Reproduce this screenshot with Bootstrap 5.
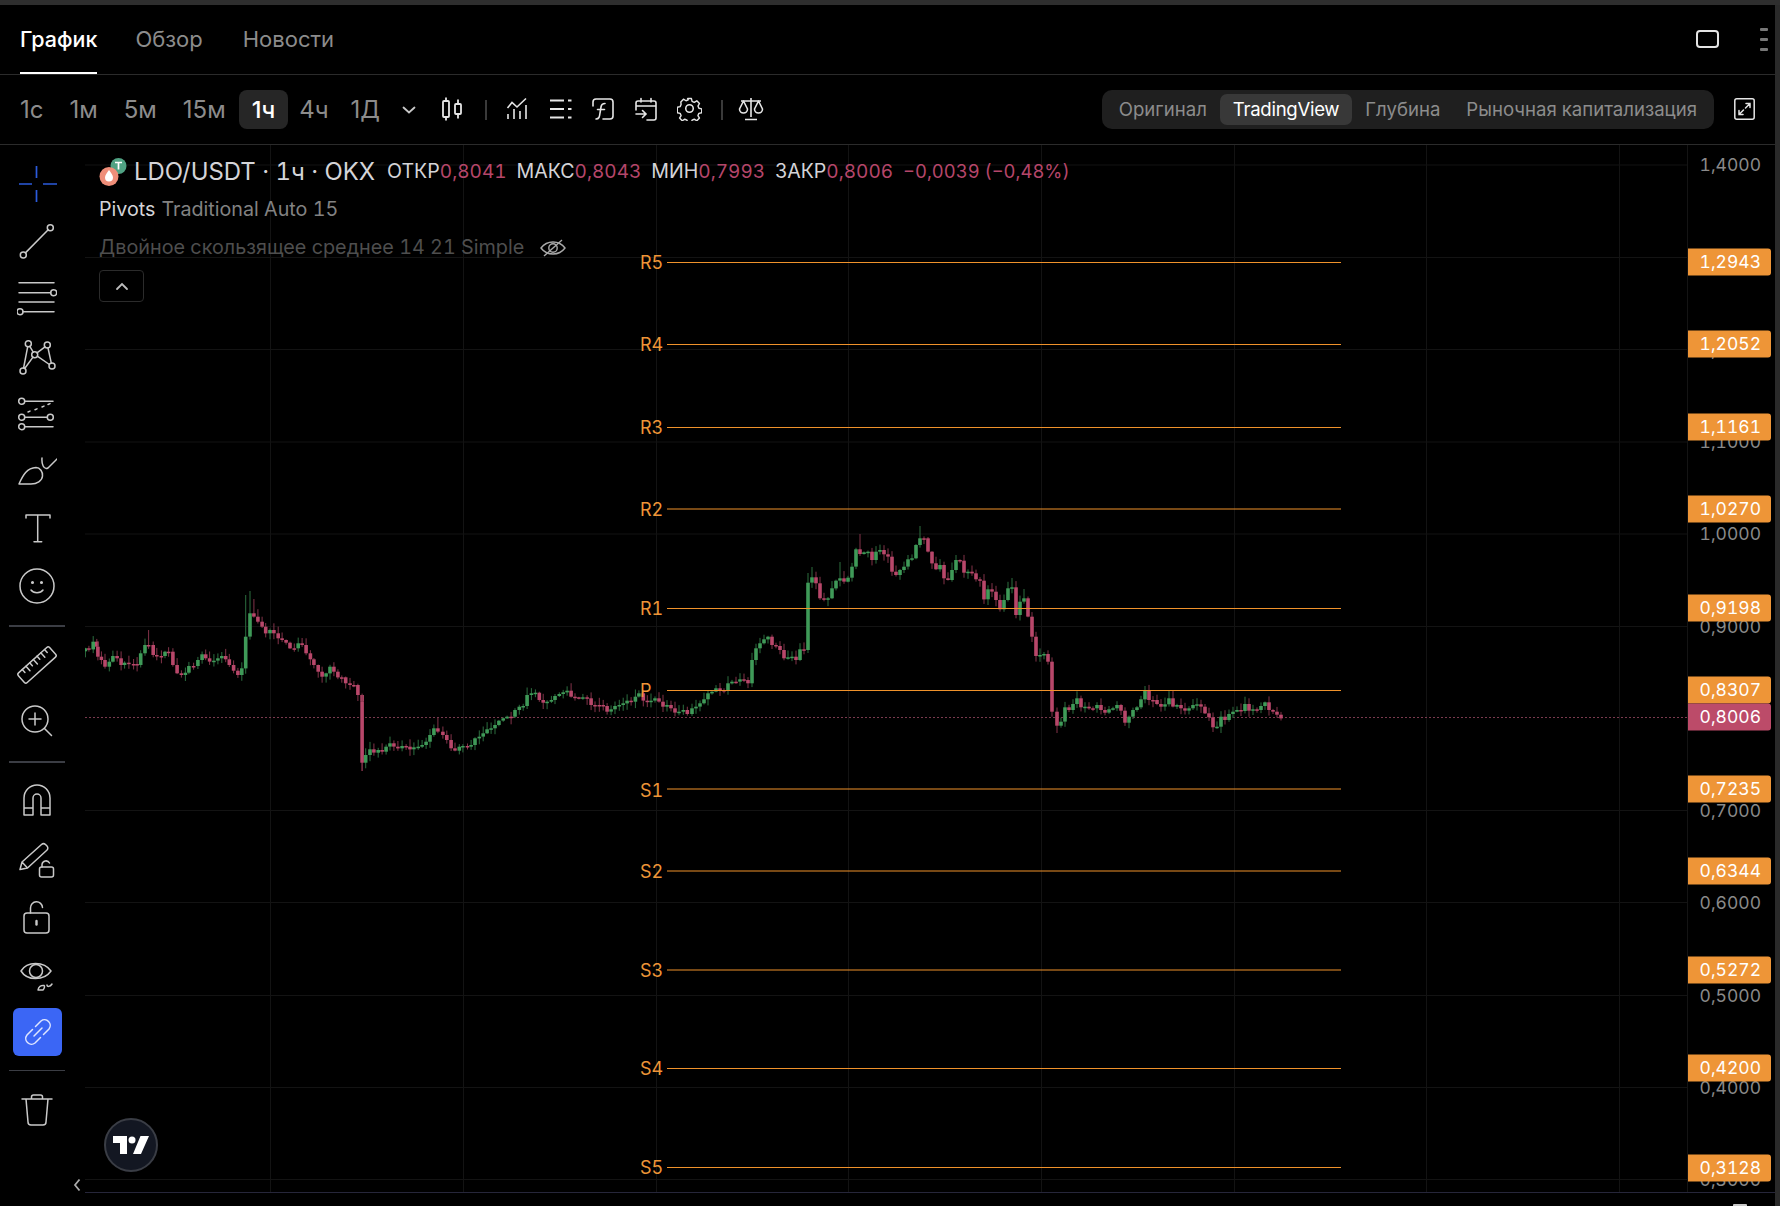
<!DOCTYPE html>
<html lang="ru">
<head>
<meta charset="utf-8">
<title>LDO/USDT</title>
<link rel="stylesheet" href="https://cdn.jsdelivr.net/npm/bootstrap@5.3.0/dist/css/bootstrap.min.css">
<style>
html,body{height:100%;margin:0;background:#000;overflow:hidden}
body{font-family:Inter,"Liberation Sans",sans-serif;color:#c8c8c8;font-variant-numeric:tabular-nums}
.top-strip{height:5px;background:#2e2e2e;flex:none}
.shell{border-right:5px solid #2a2a2a;min-height:0}
.tab-row{height:70px;border-bottom:1px solid #2b2b2b;flex:none}
.tab-row .nav-link{padding:0;height:69px;margin-right:38px;font-size:22px;font-weight:400;color:#8c8c8c;line-height:68px;border-bottom:2px solid transparent}
.tab-row .nav-link.active{color:#fff;border-bottom-color:#fff;font-weight:500;font-size:21.5px}
.tab-row .nav-link.wide-gap{margin-right:40px}
.win-ic{width:23px;height:18px;border:2px solid #e4e4e4;border-radius:4px;margin-right:41px}
.dash-stack{width:8px;margin-right:7px;gap:7px}
.dash-stack i{display:block;height:3px;background:#777;border-radius:1px}
.tool-row{height:70px;border-bottom:1px solid #2b2b2b;padding-left:7px;flex:none}
.tf-btn{padding:0 13px;height:39px;border:0;border-radius:8px;font-size:24px;line-height:39px;color:#8c8c8c;background:none}
.tf-btn.tight{padding:0 11px}
.tf-btn.active{background:#262626!important;color:#fff!important;font-weight:500;font-size:23.5px}
.tb-ic{width:43px;height:39px;padding:0;border:0;background:none}
.tb-ic svg{display:block;margin:-2px auto 0}
.chev-btn{width:28px;height:39px;padding:0;border:0;background:none;margin-left:4px}
.chev-btn svg{display:block;margin:auto}
.ml-candle{margin-left:9px}
.tb-div{width:2px;height:20px;background:#3a3a3a;margin:0 9px 0 10px}
.ml-scale{margin-left:-2px}
.seg-wrap{background:#1f1f1f;border-radius:10px;padding:4px;height:39px}
.seg-item{height:31px;line-height:31px;padding:0 13px;font-size:18.6px;color:#8c8c8c;border-radius:7px}
.seg-item.active{background:#383838;color:#fff;letter-spacing:-.3px}
.expand-ic{margin:-2px 20px 0}
.main-row{min-height:0}
.side-bar{width:85px;position:relative;padding-top:10px}
.tool-slot{height:57.4px;display:flex;align-items:center;justify-content:center;padding-right:11px}
.tool-slot.link-slot{height:48px;width:49px;margin:3px 0 0 13px;background:#3b66f5;border-radius:6px;padding:0}
.side-rule{height:2px;background:#3b3d44;margin:0 20px 0 9px}
.rule-a{margin-top:10px}
.rule-b{margin-top:13px}
.rule-c{margin-top:14px;height:1px}
.gap-a{margin-top:9px}
.gap-c{margin-top:11px}
.ic{fill:none;stroke:#c9c9c9;stroke-width:1.5;stroke-linecap:round;stroke-linejoin:round}
.collapse-chev{position:absolute;left:73px;bottom:14px}
.plot-col{min-width:0}
.chart-row{height:1047px;flex:none}
.plot-area{position:relative;min-width:0}
.plot-svg{position:absolute;left:0;top:0;width:1602px;height:1047px;display:block}
.legend-box{position:absolute;left:14px;top:8px;white-space:nowrap}
.leg-row{height:38px;display:flex;align-items:center}
.leg-main{font-size:23.9px;color:#d4d4d8;margin-left:7px;margin-right:12px}
.leg-lab{font-size:19.6px;color:#d4d4d8}
.leg-val{font-size:19px;color:#b5466a;margin-right:10px}
.leg-val.chg{font-size:18.4px}
.leg-name{font-size:19.7px;color:#d4d4d8;margin-right:6px}
.leg-par{font-size:19.7px;color:#828282}
.leg-off{font-size:19.8px;color:#4e4e4e}
.leg-eye{margin-left:16px}
.leg-toggle{width:45px;height:32px;border:1px solid #2b2b2b;border-radius:4px;margin-top:3px;display:flex;align-items:center;justify-content:center;padding:0;background:#000}
.tv-badge{position:absolute;left:19px;bottom:20px;width:54px;height:54px;border-radius:50%;background:#131722;border:2px solid #3a3d45;display:flex;align-items:center;justify-content:center}
.price-col{position:relative;width:88px;border-left:1px solid #141414;flex:none;overflow:hidden}
.price-lab,.price-tag{position:absolute;right:14px;font-size:17.5px;line-height:26px;height:26px;transform:translateY(-13px);color:#8a8a8a}
.price-tag{left:0;right:4px;height:27px;line-height:26px;text-align:right;padding-right:10px;color:#fff;background:#ee9537;border-radius:0 3px 3px 0;transform:translateY(-13.5px)}
.price-tag.now-tag{background:#bc4b69}
.time-row{border-top:1px solid #26263a;position:relative}
.time-mark{position:absolute;left:1648px;bottom:0;width:14px;height:2px;background:#c8c8c8;border-radius:1px 1px 0 0}
</style>
</head>
<body class="d-flex flex-column">
<div class="top-strip"></div>
<div class="shell d-flex flex-column flex-grow-1">
  <div class="tab-row d-flex align-items-start">
    <ul class="nav" style="padding-left:20px">
      <li class="nav-item"><a class="nav-link active" href="#">График</a></li>
      <li class="nav-item"><a class="nav-link wide-gap" href="#">Обзор</a></li>
      <li class="nav-item"><a class="nav-link" href="#">Новости</a></li>
    </ul>
    <div class="ms-auto d-flex align-items-center" style="height:68px;padding-top:0">
      <div class="win-ic"></div>
      <div class="dash-stack d-flex flex-column"><i></i><i></i><i></i></div>
    </div>
  </div>
  <div class="tool-row d-flex align-items-center">
    <button class="btn tf-btn">1с</button>
    <button class="btn tf-btn">1м</button>
    <button class="btn tf-btn">5м</button>
    <button class="btn tf-btn">15м</button>
    <button class="btn tf-btn active">1ч</button>
    <button class="btn tf-btn tight">4ч</button>
    <button class="btn tf-btn tight">1Д</button>
    <button class="chev-btn"><svg width="14" height="8" viewBox="0 0 14 8"><path d="M1.5 1.5 7 6.5l5.5-5" fill="none" stroke="#c8c8c8" stroke-width="1.8" stroke-linecap="round"/></svg></button>
    <button class="tb-ic ml-candle"><svg width="24" height="26" viewBox="0 0 24 26" fill="none" stroke="#e6e6e6" stroke-width="1.8"><rect x="2" y="5" width="6" height="16" rx="1"/><path d="M5 1.5V5M5 21v3.5"/><rect x="14" y="8" width="6" height="10" rx="1"/><path d="M17 3.5V8M17 18v4.500"/></svg></button>
    <div class="tb-div"></div>
    <button class="tb-ic"><svg width="22" height="24" viewBox="0 0 22 24" fill="none" stroke="#e6e6e6" stroke-width="1.6"><path d="M1.500 11 6 5.500l5 4.500L20 1.500"/><path d="M2 17v5M8 12v10M14 14v8M20 8v14"/></svg></button>
    <button class="tb-ic"><svg width="23" height="22" viewBox="0 0 23 22" fill="none" stroke="#e6e6e6" stroke-width="1.8"><path d="M1 2.500h14M19 2.500h3.500M1 11h14M19 11h3.500M1 19.500h14M19 19.500h3.500"/></svg></button>
    <button class="tb-ic"><svg width="22" height="22" viewBox="0 0 22 22" fill="none" stroke="#e6e6e6" stroke-width="1.6" stroke-linecap="round"><path d="M1 8V4a3 3 0 0 1 3-3h14a3 3 0 0 1 3 3v14a3 3 0 0 1-3 3h-7"/><path d="M4 21c3 0 3.500-2 4-6l1-6c.4-2.500 1.500-3.500 4-3.500M5.500 11.500h7"/></svg></button>
    <button class="tb-ic"><svg width="22" height="24" viewBox="0 0 22 24" fill="none" stroke="#e6e6e6" stroke-width="1.6" stroke-linecap="round"><path d="M1 13V6a2 2 0 0 1 2-2h16a2 2 0 0 1 2 2v15a2 2 0 0 1-2 2h-7M1 9h20M6 1.500V5M16 1.500V5"/><path d="M1 17h10M7.500 13.500 11 17l-3.500 3.500"/></svg></button>
    <button class="tb-ic"><svg width="25" height="25" viewBox="0 0 24 24" fill="none" stroke="#e6e6e6" stroke-width="1.5" stroke-linejoin="round"><circle cx="12" cy="12" r="3.600"/><path d="M10 1.500h4l.7 3 2.300 1 2.700-1.600 2.800 2.800-1.600 2.700 1 2.300 3 .7v.6l0 0v3.400l-3 .7-1 2.300 1.600 2.700-2.800 2.800-2.700-1.600-2.300 1-.7 3h-4l-.7-3-2.300-1-2.700 1.600-2.800-2.800 1.600-2.700-1-2.300-3-.7V10.700l3-.7 1-2.300L2.800 5l2.800-2.800 2.700 1.600 2.300-1z" transform="translate(1.100 1.100) scale(.91)"/></svg></button>
    <div class="tb-div"></div>
    <button class="tb-ic ml-scale"><svg width="26" height="24" viewBox="0 0 26 24" fill="none" stroke="#e6e6e6" stroke-width="1.600" stroke-linejoin="round"><path d="M13 1v19M3 4h20M7 22.500h12"/><path d="M5.500 4 1.500 12a4 4 0 0 0 8 0zM20.500 4l-4 8a4 4 0 0 0 8 0z"/></svg></button>
    <div class="seg-wrap d-flex align-items-center ms-auto">
      <div class="seg-item">Оригинал</div>
      <div class="seg-item active">TradingView</div>
      <div class="seg-item">Глубина</div>
      <div class="seg-item">Рыночная капитализация</div>
    </div>
    <svg class="expand-ic" width="21" height="22" viewBox="0 0 21 22" fill="none" stroke="#e6e6e6" stroke-width="1.500" stroke-linecap="round"><rect x=".8" y=".8" width="19.400" height="20.400" rx="2"/><path d="M12 5.500h4v4M16 5.500l-4.500 4.500M9 16.500H5v-4M5 16.500l4.500-4.500"/></svg>
  </div>
  <div class="main-row d-flex flex-grow-1">
    <aside class="side-bar flex-none">
      <div class="tool-slot"><svg width="40" height="40" viewBox="0 0 40 40" fill="none" stroke="#2b5bdc" stroke-width="1.700"><path d="M19.500 2v12M19.500 26v12M2 20h13M26 20h14"/></svg></div>
      <div class="tool-slot"><svg width="40" height="40" viewBox="0 0 40 40" class="ic"><circle cx="6.300" cy="34" r="3"/><circle cx="33.300" cy="6.700" r="3"/><path d="M8.400 31.900 31.200 8.800"/></svg></div>
      <div class="tool-slot"><svg width="40" height="40" viewBox="0 0 40 40" class="ic"><path d="M2 4.700h35M2 14.700h31.700M2 24h35M6 33.700h31"/><circle cx="36.700" cy="14.700" r="3"/><circle cx="3" cy="33.700" r="3"/></svg></div>
      <div class="tool-slot"><svg width="40" height="40" viewBox="0 0 40 40" class="ic"><circle cx="11.300" cy="7.700" r="3"/><circle cx="30.300" cy="9" r="3"/><circle cx="17.700" cy="18.700" r="3"/><circle cx="6" cy="35" r="3"/><circle cx="35" cy="30" r="3"/><path d="M6.600 32 10.700 10.700M12.800 10.300l3.400 5.800M7.700 32.500l8.300-11.400M20 16.900l8-6.100M31 12l3.300 15.100M20.300 20.200l12.100 8.300"/></svg></div>
      <div class="tool-slot"><svg width="40" height="40" viewBox="0 0 40 40" class="ic"><circle cx="4.700" cy="8.300" r="3"/><circle cx="4.700" cy="24.300" r="3"/><circle cx="33.300" cy="24.300" r="3"/><circle cx="4.700" cy="33.700" r="3"/><path d="M7.700 8.300H36M7.700 24.300h22.600M7.700 33.700H36"/><path d="M11 19l2-.9M18 16.800l2-.9M25 14l2-.9M31 11.500l2-.9"/></svg></div>
      <div class="tool-slot"><svg width="40" height="40" viewBox="0 0 40 40" class="ic"><path d="M2 33C6 24 10 17 19 16.500 23 16.500 26 21 25.500 25 25 30 20 33 14 33z"/><path d="M25 7c-.5 6 1.500 12 6 10L41 7"/></svg></div>
      <div class="tool-slot"><svg width="40" height="40" viewBox="0 0 40 40" class="ic"><path d="M9 10V7h24v3M20.700 7v26.700M17 33.700h7.700"/></svg></div>
      <div class="tool-slot" style="margin-top:1px"><svg width="40" height="40" viewBox="0 0 40 40" class="ic"><circle cx="20" cy="20" r="17"/><circle cx="15.500" cy="16.500" r=".8"/><circle cx="24.500" cy="16.500" r=".8"/><path d="M14 24c2.500 3.500 9.500 3.500 12 0"/></svg></div>
      <div class="side-rule rule-a"></div>
      <div class="tool-slot gap-a"><svg width="44" height="44" viewBox="0 0 44 44" class="ic"><g transform="rotate(-42 22 22)"><rect x="1" y="15.500" width="42" height="13" rx="2"/><path d="M8 15.500v4M13 15.500v6M18 15.500v4M23 15.500v6M28 15.500v4M33 15.500v6M38 15.500v4"/></g></svg></div>
      <div class="tool-slot" style="height:54px"><svg width="40" height="40" viewBox="0 0 40 40" class="ic"><circle cx="18" cy="18" r="13"/><path d="M18 12v12M12 18h12M27.500 27.500l7 7"/></svg></div>
      <div class="side-rule rule-b"></div>
      <div class="tool-slot" style="margin-top:9px"><svg width="40" height="40" viewBox="0 0 40 40" class="ic"><path d="M7 35V18a13 13 0 0 1 26 0v17h-9V18a4 4 0 0 0-8 0v17zM7 28h9M24 28h9"/></svg></div>
      <div class="tool-slot" style="margin-top:4px"><svg width="40" height="40" viewBox="0 0 40 40" class="ic"><path d="M3 27.500 5 20 24.500 2.500a3 3 0 0 1 4 0l1.500 1.500a3 3 0 0 1-.2 4.300L10.500 26zM3 27.500l7.500-1.500M5 20l5.500 6"/><rect x="22.500" y="25" width="14" height="10" rx="2"/><path d="M25 25v-2.500a4 4 0 0 1 7.500-1.500"/></svg></div>
      <div class="tool-slot"><svg width="40" height="40" viewBox="0 0 40 40" class="ic"><rect x="7" y="14" width="25" height="20" rx="3"/><path d="M13.500 14V9a6 6 0 0 1 12-.5"/><path d="M19.500 22v3.500" stroke-width="2.400"/></svg></div>
      <div class="tool-slot"><svg width="40" height="40" viewBox="0 0 40 40" class="ic"><path d="M4 15C10 5 27 5 34 15c-7 10-24 10-30 0z"/><circle cx="19" cy="15" r="6.500"/><path d="M21 34c.5-3 3-5 6-4.500 1 .6.5 3-1 4.500zM30 29c0 2 3 2 5-1"/></svg></div>
      <div class="tool-slot link-slot"><svg width="34" height="34" viewBox="0 0 34 34" fill="none" stroke="#dfe6ff" stroke-width="1.500" stroke-linecap="round"><path d="M14.500 11.500 20 6a5.700 5.700 0 0 1 8 8l-5.500 5.500"/><path d="M19.500 22.500 14 28a5.700 5.700 0 0 1-8-8l5.500-5.500"/><path d="M13 21l8-8"/></svg></div>
      <div class="side-rule rule-c"></div>
      <div class="tool-slot gap-c"><svg width="40" height="40" viewBox="0 0 40 40" class="ic"><path d="M5 8h30M14.500 8V6a2 2 0 0 1 2-2h7a2 2 0 0 1 2 2v2M9 8l2 23a3 3 0 0 0 3 3h12a3 3 0 0 0 3-3l2-23"/></svg></div>
      <svg class="collapse-chev" width="8" height="14" viewBox="0 0 8 14" fill="none" stroke="#aaa" stroke-width="1.800"><path d="M6.500 1.500 2 7l4.500 5.500"/></svg>
    </aside>
    <div class="plot-col d-flex flex-column flex-grow-1">
      <div class="chart-row d-flex">
        <div class="plot-area flex-grow-1">
          <svg class="plot-svg" id="plot" viewBox="85 145 1602 1047" xmlns="http://www.w3.org/2000/svg">
            <g stroke="#131313" stroke-width="1">
              <path d="M270.500 145V1192M463.500 145V1192M656.500 145V1192M848.500 145V1192M1041.500 145V1192M1234.500 145V1192M1426.500 145V1192M1619.500 145V1192"/>
              <path d="M85 165H1687M85 257.500H1687M85 349.500H1687M85 442H1687M85 534H1687M85 626.500H1687M85 810.500H1687M85 902.500H1687M85 995.500H1687M85 1087.500H1687M85 1179.500H1687"/>
            </g>
            <path d="M85 717.500H1687" stroke="#7a3a4e" stroke-width="1" stroke-dasharray="2 2"/>
            <g id="candles"></g>
            <g stroke="#f0922b" stroke-width="1.200">
              <path d="M667 262.500H1341M667 344.500H1341M667 427.500H1341M667 509H1341M667 608.500H1341M667 690.500H1341M667 789H1341M667 871H1341M667 970H1341M667 1068.500H1341M667 1167.500H1341"/>
            </g>
            <g fill="#ee9537" font-family="Inter,'Liberation Sans',sans-serif" font-size="18">
              <text x="640" y="269">R5</text><text x="640" y="351">R4</text><text x="640" y="434">R3</text><text x="640" y="515.500">R2</text><text x="640" y="615">R1</text><text x="640" y="697">P</text><text x="640" y="796.500">S1</text><text x="640" y="877.500">S2</text><text x="640" y="976.500">S3</text><text x="640" y="1075">S4</text><text x="640" y="1174">S5</text>
            </g>
          </svg>
          <div class="legend-box">
            <div class="leg-row">
              <svg width="28" height="28" viewBox="0 0 28 28"><circle cx="19.500" cy="8" r="8" fill="#50a283"/><path d="M16 4.500h7M19.500 4.500v7" stroke="#fff" stroke-width="1.700"/><circle cx="10" cy="18.500" r="9.500" fill="#ef8e79"/><path d="M10 12c-2 3-4 5-4 7.500a4 4 0 0 0 8 0c0-2.500-2-4.500-4-7.500z" fill="#fff"/></svg>
              <span class="leg-main">LDO/USDT · 1ч · OKX</span>
              <span class="leg-lab">ОТКР</span><span class="leg-val">0,8041</span>
              <span class="leg-lab">МАКС</span><span class="leg-val">0,8043</span>
              <span class="leg-lab">МИН</span><span class="leg-val">0,7993</span>
              <span class="leg-lab">ЗАКР</span><span class="leg-val">0,8006</span>
              <span class="leg-val chg">−0,0039 (−0,48%)</span>
            </div>
            <div class="leg-row"><span class="leg-name">Pivots</span><span class="leg-par">Traditional Auto 15</span></div>
            <div class="leg-row"><span class="leg-off">Двойное скользящее среднее 14 21 Simple</span>
              <svg class="leg-eye" width="26" height="20" viewBox="0 0 26 20" fill="none" stroke="#a9a9a9" stroke-width="1.400"><path d="M1 10c6-8 18-8 24 0-6 8-18 8-24 0z"/><circle cx="13" cy="10" r="4.200"/><path d="M4 18 22 2"/></svg></div>
            <button class="leg-toggle"><svg width="14" height="9" viewBox="0 0 14 9" fill="none" stroke="#bdbdbd" stroke-width="1.800" stroke-linecap="round"><path d="M2 7 7 2l5 5"/></svg></button>
          </div>
          <div class="tv-badge"><svg width="36" height="18" viewBox="0 0 36 18" fill="#fff"><path d="M14 18H7V7H0V0h14zM28 18h-8L27.500 0H36z"/><circle cx="19" cy="4" r="3.500"/></svg></div>
        </div>
        <div class="price-col">
          <span class="price-lab" style="top:20px">1,4000</span>
          <span class="price-lab" style="top:112.500px">1,3000</span>
          <span class="price-lab" style="top:204.500px">1,2000</span>
          <span class="price-lab" style="top:297px">1,1000</span>
          <span class="price-lab" style="top:389px">1,0000</span>
          <span class="price-lab" style="top:481.500px">0,9000</span>
          <span class="price-lab" style="top:573.500px">0,8000</span>
          <span class="price-lab" style="top:665.500px">0,7000</span>
          <span class="price-lab" style="top:757.500px">0,6000</span>
          <span class="price-lab" style="top:850.500px">0,5000</span>
          <span class="price-lab" style="top:942.500px">0,4000</span>
          <span class="price-lab" style="top:1034.500px">0,3000</span>
          <div class="price-tag" style="top:117px">1,2943</div>
          <div class="price-tag" style="top:199px">1,2052</div>
          <div class="price-tag" style="top:282px">1,1161</div>
          <div class="price-tag" style="top:364px">1,0270</div>
          <div class="price-tag" style="top:463px">0,9198</div>
          <div class="price-tag" style="top:545px">0,8307</div>
          <div class="price-tag" style="top:643.500px">0,7235</div>
          <div class="price-tag" style="top:726px">0,6344</div>
          <div class="price-tag" style="top:825px">0,5272</div>
          <div class="price-tag" style="top:923px">0,4200</div>
          <div class="price-tag" style="top:1022.500px">0,3128</div>
          <div class="price-tag now-tag" style="top:572px">0,8006</div>
        </div>
      </div>
      <div class="time-row flex-grow-1"><div class="time-mark"></div></div>
    </div>
  </div>
</div>
<script src="https://cdn.jsdelivr.net/npm/bootstrap@5.3.0/dist/js/bootstrap.bundle.min.js"></script>
<script>
(function(){
var a=[15,235,25,238,37,215,47,230,50,260,60,270,70,290,82,275,92,258,104,265,115,285,125,278,137,282,150,282,160,285,170,250,182,225,192,225,205,255,215,258,228,258,238,245,248,245,260,285,272,310,284,315,295,308,305,288,318,288,330,270,342,253,352,265,363,275,375,272,386,265,397,258,408,268,418,285,430,302,442,315,453,295,464,200,476,130,487,140,498,155,510,170,520,190,532,180,543,190,555,205,566,210,577,218,588,235,600,235,611,220,622,225,633,250,645,268,655,285,667,305,678,320,689,310,700,290,711,305,722,322,733,322,744,340,756,345,767,345,778,375,790,395,790,578,800,555,812,538,823,548,835,540,846,545,857,530,868,520,879,530,890,535,902,528,913,530,924,538,935,532,947,530,958,525,969,515,980,495,991,475,1002,485,1016,495,1027,510,1039,535,1050,542,1062,530,1072,528,1085,530,1095,525,1106,505,1118,500,1129,490,1140,478,1151,475,1162,465,1173,452,1185,445,1196,440,1207,440,1218,420,1230,410,1241,408,1252,375,1264,370,1275,368,1286,390,1297,398,1308,395,1320,390,1330,378,1342,372,1353,367,1364,362,1375,380,1386,382,1397,385,1408,382,1420,385,1431,405,1442,405,1454,405,1465,408,1476,425,1487,418,1498,408,1510,405,1521,400,1532,392,1543,395,1555,380,1565,370];
var b=[40,572,52,575,63,572,75,565,87,575,99,590,111,585,123,595,135,608,147,605,160,600,172,612,186,595,198,590,210,580,222,568,234,550,246,545,258,535,270,540,282,540,294,520,306,515,318,515,330,508,342,510,354,520,366,450,378,415,390,400,402,388,414,380,426,405,438,408,450,420,462,445,474,442,486,440,498,450,510,418,522,420,534,218,546,202,558,220,570,265,582,268,594,265,606,235,618,212,630,205,642,215,654,203,666,170,678,118,690,132,702,127,714,125,726,150,738,125,750,120,762,133,774,140,786,185,798,195,810,180,822,170,834,148,846,145,858,105,870,85,882,85,894,125,906,160,918,178,930,165,942,205,954,210,966,180,978,150,990,152,1002,188,1014,185,1026,190,1038,208,1050,212,1062,268,1074,238,1086,245,1098,270,1110,298,1122,270,1134,235,1146,232,1158,315,1170,275,1182,265,1194,320,1206,380,1218,438,1230,435,1242,432,1254,455];
var c=[96,395,111,437,123,425,135,382,147,390,159,372,171,355,183,382,195,380,207,385,219,385,231,375,243,390,255,398,267,388,279,385,291,375,303,392,315,428,327,410,339,390,351,382,363,358,375,332,387,360,399,360,411,372,423,380,435,373,447,355,459,380,471,375,483,385,495,392,507,385,519,375,531,373,543,380,555,400,567,412,579,442,591,440,603,410,615,420,627,402,639,395,651,390,663,393,675,372,687,392,699,388,711,390,723,378,735,367,747,390,759,395,771,404,783,415];
var pts=[],i;
for(i=0;i<a.length;i+=2)pts.push([80+a[i]/2.8,570+a[i+1]/3]);
for(i=0;i<b.length;i+=2)pts.push([630+b[i]/3,510+b[i+1]/3]);
for(i=0;i<c.length;i+=2)pts.push([1020+c[i]/3,580+c[i+1]/3]);
/* long wicks read from the picture: [x, y] */
var spikes=[[246,595],[250,591],[254,599],[149,630],[362,771],[438,718],[920,526],[860,534],[1145,686],[1057,733],[840,562],[1012,578],[1024,589],[808,573],[812,567]];
var seed=7;function rnd(){seed=(seed*16807)%2147483647;return seed/2147483647;}
var prev=pts[0][1]+3,h='';
pts.forEach(function(p){
  var x=p[0],cl=p[1],op=prev,up=cl<op;
  var top=Math.min(op,cl),bot=Math.max(op,cl);
  if(bot-top<1.5)bot=top+1.5;
  var wt=top-rnd()*7-0.5,wb=bot+rnd()*6+0.5;
  spikes.forEach(function(s){if(Math.abs(s[0]-x)<2.1){if(s[1]<top)wt=s[1];else wb=s[1];}});
  var col=up?'#3f9a58':'#b8476a',wc=up?'#2c6e3f':'#823249';
  h+='<rect x="'+(x-0.5).toFixed(1)+'" y="'+wt.toFixed(1)+'" width="1" height="'+(wb-wt).toFixed(1)+'" fill="'+wc+'"/>';
  h+='<rect x="'+(x-1.8).toFixed(1)+'" y="'+top.toFixed(1)+'" width="3.6" height="'+(bot-top).toFixed(1)+'" fill="'+col+'"/>';
  prev=cl;
});
document.getElementById('candles').innerHTML=h;
})();
</script>
</body>
</html>
